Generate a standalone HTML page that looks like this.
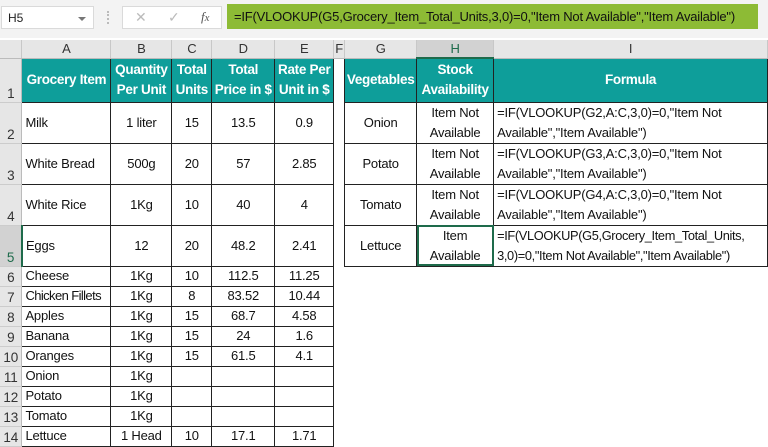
<!DOCTYPE html>
<html><head><style>
body{margin:0;width:768px;height:446px;overflow:hidden;background:#fff;font-family:"Liberation Sans",sans-serif;position:relative}
.top{position:absolute;left:0;top:0;width:768px;height:38px;background:#f3f3f3}
.nb{position:absolute;left:1px;top:6px;width:93px;height:23px;background:#fff;border:1px solid #dadada;font-size:12px;line-height:23px;padding-left:6px;box-sizing:border-box;color:#222}
.nb:after{content:"";position:absolute;right:7px;top:10px;border-left:4px solid transparent;border-right:4px solid transparent;border-top:4px solid #777}
.dots{position:absolute;left:107px;top:11px;width:2px;height:13px;border-left:2px dotted #bbb}
.btn{position:absolute;left:122px;top:6px;width:100px;height:23px;background:#fff;border:1px solid #dadada;box-sizing:border-box;color:#bbb;font-size:14px}
.fb{position:absolute;left:227px;top:4px;width:531px;height:25px;background:#8dbb35;font-size:13px;line-height:25px;padding-left:7px;box-sizing:border-box;color:#111;white-space:nowrap;letter-spacing:-0.2px}
table{position:absolute;left:0;top:40px;border-collapse:collapse;table-layout:fixed;font-size:13px;letter-spacing:-0.2px}
td{padding:0;overflow:hidden;white-space:nowrap;text-align:center;color:#111;line-height:16px}
.ch td{background:#e6e6e6;color:#333;font-size:13px;border-right:1px solid #c8c8c8;border-bottom:1px solid #bbb}
td.rh{background:#e6e6e6;color:#333;text-align:center;vertical-align:bottom;border-bottom:1px solid #ccc;border-right:1px solid #bbb;font-size:13.5px}
td.b{border:1px solid #222}
td.h{background:#0e9e9a;color:#fff;font-weight:bold;border:1px solid #222;line-height:20px;font-size:13.5px;letter-spacing:-0.3px}
td.l{text-align:left;padding-left:3px}
td.w{line-height:20px}
td.sel{outline:2px solid #1e6b4b;outline-offset:-2px}
</style></head><body>
<div class="top">
<div class="nb">H5</div>
<div class="dots"></div>
<div class="btn"><span style="position:absolute;left:12px;top:2px">✕</span><span style="position:absolute;left:45px;top:2px">✓</span><span style="position:absolute;left:78px;top:2px;color:#555;font-family:'Liberation Serif';font-style:italic;font-size:13px">f<small>x</small></span></div>
<div class="fb">=IF(VLOOKUP(G5,Grocery_Item_Total_Units,3,0)=0,"Item Not Available","Item Available")</div>
</div>
<table>
<colgroup><col style="width:22px"><col style="width:89px"><col style="width:61px"><col style="width:40px"><col style="width:63px"><col style="width:59px"><col style="width:11px"><col style="width:72px"><col style="width:77px"><col style="width:274px"></colgroup>
<tr class="ch" style="height:18px"><td style="background:#e6e6e6"></td><td>A</td><td>B</td><td>C</td><td>D</td><td>E</td><td>F</td><td>G</td><td style="background:#d2d2d2;color:#1e6b4b;border-bottom:2px solid #1e6b4b">H</td><td>I</td></tr>
<tr style="height:44px"><td class="rh">1</td><td class="h">Grocery Item</td><td class="h">Quantity<br>Per Unit</td><td class="h">Total<br>Units</td><td class="h">Total<br>Price in $</td><td class="h">Rate Per<br>Unit in $</td><td></td><td class="h">Vegetables</td><td class="h">Stock<br>Availability</td><td class="h">Formula</td></tr>
<tr style="height:38px"><td class="rh">2</td><td class="b l">Milk</td><td class="b">1 liter</td><td class="b">15</td><td class="b">13.5</td><td class="b">0.9</td><td></td><td class="b">Onion</td><td class="b w">Item Not<br>Available</td><td class="b l w">=IF(VLOOKUP(G2,A:C,3,0)=0,"Item Not<br>Available","Item Available")</td></tr>
<tr style="height:39px"><td class="rh">3</td><td class="b l">White Bread</td><td class="b">500g</td><td class="b">20</td><td class="b">57</td><td class="b">2.85</td><td></td><td class="b">Potato</td><td class="b w">Item Not<br>Available</td><td class="b l w">=IF(VLOOKUP(G3,A:C,3,0)=0,"Item Not<br>Available","Item Available")</td></tr>
<tr style="height:40px"><td class="rh">4</td><td class="b l">White Rice</td><td class="b">1Kg</td><td class="b">10</td><td class="b">40</td><td class="b">4</td><td></td><td class="b">Tomato</td><td class="b w">Item Not<br>Available</td><td class="b l w">=IF(VLOOKUP(G4,A:C,3,0)=0,"Item Not<br>Available","Item Available")</td></tr>
<tr style="height:41px"><td class="rh" style="background:#d2d2d2;color:#1e6b4b;border-right:2px solid #1e6b4b">5</td><td class="b l">Eggs</td><td class="b">12</td><td class="b">20</td><td class="b">48.2</td><td class="b">2.41</td><td></td><td class="b">Lettuce</td><td class="b w sel">Item<br>Available</td><td class="b l w" style="letter-spacing:-0.35px;font-size:12.8px">=IF(VLOOKUP(G5,Grocery_Item_Total_Units,<br>3,0)=0,"Item Not Available","Item Available")</td></tr>
<tr style="height:20px"><td class="rh">6</td><td class="b l">Cheese</td><td class="b">1Kg</td><td class="b">10</td><td class="b">112.5</td><td class="b">11.25</td><td colspan="4"></td></tr>
<tr style="height:20px"><td class="rh">7</td><td class="b l" style="letter-spacing:-0.6px">Chicken Fillets</td><td class="b">1Kg</td><td class="b">8</td><td class="b">83.52</td><td class="b">10.44</td><td colspan="4"></td></tr>
<tr style="height:20px"><td class="rh">8</td><td class="b l">Apples</td><td class="b">1Kg</td><td class="b">15</td><td class="b">68.7</td><td class="b">4.58</td><td colspan="4"></td></tr>
<tr style="height:20px"><td class="rh">9</td><td class="b l">Banana</td><td class="b">1Kg</td><td class="b">15</td><td class="b">24</td><td class="b">1.6</td><td colspan="4"></td></tr>
<tr style="height:20px"><td class="rh">10</td><td class="b l">Oranges</td><td class="b">1Kg</td><td class="b">15</td><td class="b">61.5</td><td class="b">4.1</td><td colspan="4"></td></tr>
<tr style="height:20px"><td class="rh">11</td><td class="b l">Onion</td><td class="b">1Kg</td><td class="b"></td><td class="b"></td><td class="b"></td><td colspan="4"></td></tr>
<tr style="height:20px"><td class="rh">12</td><td class="b l">Potato</td><td class="b">1Kg</td><td class="b"></td><td class="b"></td><td class="b"></td><td colspan="4"></td></tr>
<tr style="height:20px"><td class="rh">13</td><td class="b l">Tomato</td><td class="b">1Kg</td><td class="b"></td><td class="b"></td><td class="b"></td><td colspan="4"></td></tr>
<tr style="height:20px"><td class="rh">14</td><td class="b l">Lettuce</td><td class="b">1 Head</td><td class="b">10</td><td class="b">17.1</td><td class="b">1.71</td><td colspan="4"></td></tr>
</table>
</body></html>
